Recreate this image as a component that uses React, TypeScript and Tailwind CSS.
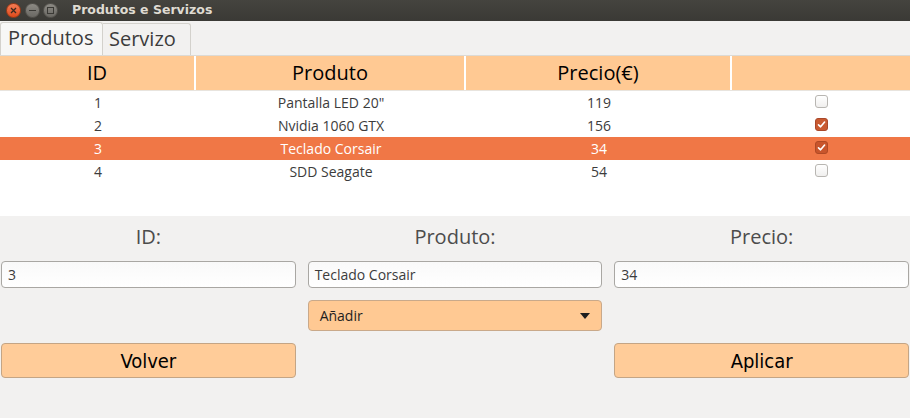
import React from "react";

const rows = [
  { id: 1, name: 'Pantalla LED 20"', price: 119, checked: false },
  { id: 2, name: "Nvidia 1060 GTX", price: 156, checked: true },
  { id: 3, name: "Teclado Corsair", price: 34, checked: true, selected: true },
  { id: 4, name: "SDD Seagate", price: 54, checked: false },
];

function Check({ checked, selected }: { checked: boolean; selected?: boolean }) {
  if (checked) {
    return (
      <div className={`w-[13px] h-[13px] rounded-[3px] flex items-center justify-center ${selected ? "bg-[#c8552c] border border-[#b04a25]" : "bg-[#c95a30] border border-[#a9482a]"}`}>
        <svg width="9" height="9" viewBox="0 0 9 9">
          <path d="M1.5 4.8 L3.6 6.8 L7.6 2" stroke="white" strokeWidth="1.6" fill="none" strokeLinecap="round" strokeLinejoin="round" />
        </svg>
      </div>
    );
  }
  return <div className="w-[13px] h-[13px] rounded-[3px] border border-[#b8b6b2] bg-gradient-to-b from-white to-[#f0efee]" />;
}

export default function App() {
  return (
    <div className="w-[910px] h-[418px] bg-[#f2f1f0] flex flex-col overflow-hidden" style={{ fontFamily: '"Open Sans", "Noto Sans", sans-serif' }}>
      {/* Title bar */}
      <div className="h-[21px] bg-gradient-to-b from-[#45443f] to-[#3a3935] flex items-center pl-[6px]">
        <div className="w-[15px] h-[15px] rounded-full bg-gradient-to-b from-[#f37b53] to-[#df4a19] flex items-center justify-center border border-[#9e3a16]">
          <svg width="7" height="7" viewBox="0 0 7 7"><path d="M1 1 L6 6 M6 1 L1 6" stroke="#3a2a20" strokeWidth="1.3" /></svg>
        </div>
        <div className="ml-[4px] w-[15px] h-[15px] rounded-full bg-gradient-to-b from-[#8c8a84] to-[#6a6863] flex items-center justify-center border border-[#55534e]">
          <div className="w-[7px] h-[1.5px] bg-[#3a3935]" />
        </div>
        <div className="ml-[3px] w-[15px] h-[15px] rounded-full bg-gradient-to-b from-[#8c8a84] to-[#6a6863] flex items-center justify-center border border-[#55534e]">
          <div className="w-[7px] h-[7px] border border-[#3a3935]" />
        </div>
        <span className="ml-[14px] text-[12.5px] font-bold text-[#dfdbd2] leading-none" style={{ fontFamily: '"DejaVu Sans", sans-serif' }}>Produtos e Servizos</span>
      </div>

      {/* Tabs */}
      <div className="h-[35px] flex items-end bg-[#f2f1f0] border-b border-[#dcdad5]">
        <div className="h-[33px] w-[103px] bg-[#f7f7f6] border border-b-0 border-[#d3d1cc] rounded-t-[3px] flex items-center pl-[7px] pb-[2px] text-[20px] text-[#3c3c3c]">Produtos</div>
        <div className="h-[32px] w-[88px] border-r border-t border-[#d3d1cc] rounded-tr-[3px] flex items-center pl-[6px] pb-[2px] text-[20px] text-[#3c3c3c]">Servizo</div>
      </div>

      {/* Table */}
      <div className="h-[160px] bg-white flex flex-col">
        <div className="grid grid-cols-[196px_270px_266px_1fr] h-[35px] bg-[#ffc993] border-b border-[#e8e4de] text-[20px] text-black">
          <div className="flex items-center justify-center border-r-2 border-white">ID</div>
          <div className="flex items-center justify-center border-r-2 border-white">Produto</div>
          <div className="flex items-center justify-center border-r-2 border-white">Precio(€)</div>
          <div />
        </div>
        <div>
          {rows.map((r) => (
            <div key={r.id} className={`grid grid-cols-[196px_270px_266px_1fr] h-[23px] text-[14px] ${r.selected ? "bg-[#f07746] text-white" : "text-[#3c3c3c]"}`}>
              <div className="flex items-center justify-center">{r.id}</div>
              <div className="flex items-center justify-center">{r.name}</div>
              <div className="flex items-center justify-center">{r.price}</div>
              <div className="flex items-center pl-[83px] pb-[2px]"><Check checked={r.checked} selected={r.selected} /></div>
            </div>
          ))}
        </div>
      </div>

      {/* Form */}
      <div className="px-[1px] pt-[8px]">
        <div className="grid grid-cols-3 gap-x-[12px]">
          <div className="text-center text-[20px] text-[#4c4c4c] h-[25px] leading-[25px]">ID:</div>
          <div className="text-center text-[20px] text-[#4c4c4c] h-[25px] leading-[25px]">Produto:</div>
          <div className="text-center text-[20px] text-[#4c4c4c] h-[25px] leading-[25px]">Precio:</div>

          <div className="mt-[12px] h-[27px] rounded-[4px] border border-[#a9a7a3] bg-gradient-to-b from-[#f9f9f9] to-white flex items-center px-[6px] text-[14px] text-[#3c3c3c]">3</div>
          <div className="mt-[12px] h-[27px] rounded-[4px] border border-[#a9a7a3] bg-gradient-to-b from-[#f9f9f9] to-white flex items-center px-[6px] text-[14px] text-[#3c3c3c]">Teclado Corsair</div>
          <div className="mt-[12px] h-[27px] rounded-[4px] border border-[#a9a7a3] bg-gradient-to-b from-[#f9f9f9] to-white flex items-center px-[6px] text-[14px] text-[#3c3c3c]">34</div>

          <div />
          <div className="mt-[12px] h-[31px] rounded-[4px] border border-[#c9a98a] bg-[#ffc993] flex items-center justify-between pl-[11px] pr-[11px] text-[14px] text-[#1e1e1e]">
            <span>Añadir</span>
            <svg width="10" height="6" viewBox="0 0 10 6"><path d="M0 0 L10 0 L5 6 Z" fill="#1e1e1e" /></svg>
          </div>
          <div />

          <div className="mt-[12px] h-[35px] rounded-[4px] border border-[#c4a585] bg-[#ffcc99] flex items-center justify-center text-[20px] text-black" style={{ fontFamily: '"DejaVu Sans Condensed", "DejaVu Sans", sans-serif' }}>Volver</div>
          <div />
          <div className="mt-[12px] h-[35px] rounded-[4px] border border-[#c4a585] bg-[#ffcc99] flex items-center justify-center text-[20px] text-black" style={{ fontFamily: '"DejaVu Sans Condensed", "DejaVu Sans", sans-serif' }}>Aplicar</div>
        </div>
      </div>
    </div>
  );
}
